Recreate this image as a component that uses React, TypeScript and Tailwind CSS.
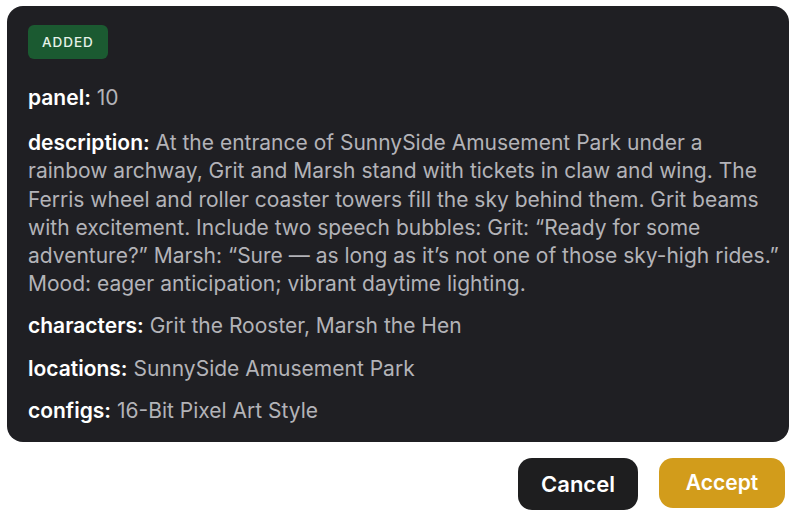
import React from "react";

type Field = {
  label: string;
  value: string;
};

const fields: Field[] = [
  { label: "panel", value: "10" },
  {
    label: "description",
    value:
      "At the entrance of SunnySide Amusement Park under a rainbow archway, Grit and Marsh stand with tickets in claw and wing. The Ferris wheel and roller coaster towers fill the sky behind them. Grit beams with excitement. Include two speech bubbles: Grit: \u201cReady for some adventure?\u201d Marsh: \u201cSure \u2014 as long as it\u2019s not one of those sky-high rides.\u201d Mood: eager anticipation; vibrant daytime lighting.",
  },
  { label: "characters", value: "Grit the Rooster, Marsh the Hen" },
  { label: "locations", value: "SunnySide Amusement Park" },
  { label: "configs", value: "16-Bit Pixel Art Style" },
];

const App: React.FC = () => {
  return (
    <div className="w-[796px] h-[516px] bg-white font-['Inter','Noto_Sans',sans-serif] pt-[6px] px-[7px]">
      <section className="rounded-[16px] bg-[#1f1f23] pl-[21px] pr-[6px] pt-[19px] pb-[17px]">
        <span className="inline-flex items-center h-[34px] px-[14px] rounded-[6px] bg-[#1b5a31] text-[13.5px] tracking-[0.07em] font-medium text-[#e6f2e9]">
          ADDED
        </span>
        <div className="mt-[25px] flex flex-col gap-[14px]">
          {fields.map((f, i) => (
            <div
              key={f.label}
              className={`text-[21px] leading-[28.2px] text-[#b3b3b8] ${i === 1 ? "mt-[3px]" : ""}`}
            >
              <span className="font-semibold text-white">{f.label}:</span> {f.value}
            </div>
          ))}
        </div>
      </section>
      <div className="flex justify-end items-start gap-[21px] mt-[16px] pr-[4px]">
        <button className="h-[52px] w-[120px] rounded-[14px] bg-[#1e1e1f] text-white text-[22px] font-semibold">
          Cancel
        </button>
        <button className="h-[50px] w-[126px] rounded-[14px] bg-[#d29c1b] text-white text-[21px] font-semibold">
          Accept
        </button>
      </div>
    </div>
  );
};

export default App;
